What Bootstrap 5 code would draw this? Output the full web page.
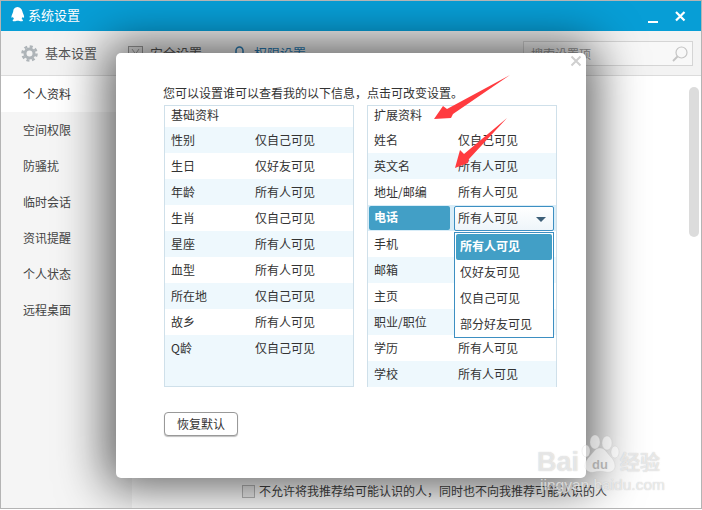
<!DOCTYPE html>
<html lang="zh"><head><meta charset="utf-8"><title>系统设置</title>
<link href="https://cdn.jsdelivr.net/npm/bootstrap@5.3.0/dist/css/bootstrap.min.css" rel="stylesheet">
<style>
html,body{margin:0;width:702px;height:510px;overflow:hidden;background:#fff}
body{font-family:"Noto Sans CJK SC","Liberation Sans",sans-serif;font-size:12px;color:#333}
.app-win{position:relative;width:702px;height:509px;border:1px solid #b4b4b4;overflow:hidden;background:#fff}
.title-bar{height:30px;background:#079ed6;color:#fff;font-size:13px;padding:0 7px 2px 8px}
.title-text{margin-left:2px}
.tool-bar{height:45px;background:#f3f3f3;border-bottom:1px solid #dcdcdc;font-size:13px;color:#555;padding-left:20px}
.tool-item{display:flex;align-items:center;gap:7px}
.tool-safe{margin-left:31px}.tool-perm{margin-left:30px;color:#2b7fb8}
.search-box{position:absolute;left:522px;top:40px;width:170px;height:25px;border:1px solid #d5d5d5;background:#f8f8f8;color:#999;padding:0 4px 0 7px;line-height:23px}
.side-nav{width:131px;background:#f5f5f5;flex:none}
.side-link{height:36px;padding:0 0 0 22px;line-height:36px;color:#444;display:block;text-decoration:none}
.side-link.active{background:#fff;color:#333}
.main-area{background:#fff;position:relative}
.scroll-thumb{position:absolute;right:2px;top:11px;width:10px;height:150px;border-radius:5px;background:#dcdcdc}
.opt-line{position:absolute;left:110px;bottom:9px;color:#444;line-height:16px;white-space:nowrap;gap:4px}
.opt-box{width:13px;height:13px;border:1px solid #bbb;background:#f4f4f4;flex:none}
.set-dialog{position:absolute;left:115px;top:52px;width:470px;height:425px;background:#fff;border-radius:5px;box-shadow:0 0 48px 10px rgba(0,0,0,.62);padding:26px 29px 0 48px;color:#333}
.dlg-close{position:absolute;right:4px;top:2px;width:12px;height:12px;margin:0;padding:0;border:0;background:none;line-height:0}
.intro{height:26px;line-height:27px;font-size:12px;white-space:nowrap;margin-left:-1px}
.panels-row{column-gap:13px}
.info-panel{width:190px;height:282px;border:1px solid #cfe0ea;background:#fff;flex:none}
.info-panel.tint-fill{background:#eef8fd}
.panel-head{height:21px;line-height:18px;padding-left:6px;background:#fff}
.info-row{height:26px;line-height:25px;display:flex;padding-left:6px}
.info-row.tint{background:#eef8fd}
.info-row.plain{background:#fff}
.lab{width:84px;flex:none}
.lab-r{width:84px;flex:none}
.hot-row{padding:1px 0 0 1px;background:#d9edf8;height:26px;display:flex;gap:4px}
.hot-lab{width:81px;height:24px;background:#429fc6;color:#fff;font-weight:700;line-height:22px;padding-left:5px;border-radius:2px}
.hot-sel{width:100px;height:25px;border:1px solid #3d8fc2;border-radius:2px;background:linear-gradient(#fff,#eef5fa);line-height:21px;padding-left:3px;color:#333;position:relative}
.caret-mark{position:absolute;right:7px;top:10px;width:0;height:0;border:5px solid transparent;border-top:5px solid #3d5f78;border-bottom:0}
.pick-menu{position:absolute;left:338px;top:179px;width:100px;height:106px;min-width:0;border:1px solid #3d8fc2;border-radius:0;padding:1px;background:#fff;font-size:12px;margin:0}
.pick-item{height:26px;line-height:23px;padding:0 0 0 4px;color:#333;display:block;text-decoration:none}
.pick-item.active{background:#429fc6;color:#fff;font-weight:700;border-radius:2px}
.reset-btn{margin-top:25px;width:74px;height:24px;padding:0;font-size:12px;line-height:22px;background:#fff;color:#333;border:1px solid #999;border-radius:4px;box-shadow:0 1px 1px rgba(0,0,0,.25)}
.arrow-layer{position:absolute;left:0;top:0;width:702px;height:510px;pointer-events:none}
.wm{position:absolute;color:rgba(255,255,255,.6);white-space:nowrap;font-family:"Liberation Sans",sans-serif;text-shadow:0 0 1px rgba(150,150,150,.6)}
.wm-bai{left:537px;top:446px;font-size:27px;line-height:32px;font-weight:700}
.wm-du{left:592px;top:458px;font-size:13px;line-height:14px;font-weight:700;color:rgba(120,120,120,.5);text-shadow:none}
.wm-jy{left:620px;top:449px;font-size:20px;line-height:26px;font-family:"Noto Sans CJK SC",sans-serif;font-weight:700}
.wm-url{left:540px;top:476px;font-size:15.5px;line-height:18px}
</style></head>
<body>
<div class="app-win d-flex flex-column">
  <div class="title-bar d-flex align-items-center flex-none">
    <svg width="17" height="18" viewBox="0 0 17 18"><path fill="#fff" d="M8.5 1C5.6 1 4.2 3.2 4.2 5.6c-.1 1-.6 1.6-1 2.6-.6 1.4-1 3-.5 3.5.3.3.9-.3 1.2-.9.2.9.6 1.7 1.2 2.3-1 .4-1.7 1-1.4 1.7.3.7 2.2.7 3.4.2.6-.3 1-.3 1.7-.3s1.1 0 1.700.3c1.200.5 3.100.5 3.400-.2.300-.7-.400-1.300-1.400-1.700.600-.6 1-1.400 1.200-2.300.3.6.9 1.200 1.200.9.5-.5.1-2.100-.5-3.500-.4-1-.9-1.600-1-2.600C12.800 3.200 11.400 1 8.500 1z"/></svg>
    <span class="title-text flex-grow-1">系统设置</span>
    <svg width="52" height="16" viewBox="0 0 52 16"><path d="M6 15h10" stroke="#fff" stroke-width="2"/><path d="M34 5l8.500 8.500M42.500 5L34 13.500" stroke="#fff" stroke-width="2.200"/></svg>
  </div>
  <div class="tool-bar d-flex align-items-center">
    <div class="tool-item">
      <svg width="17" height="17" viewBox="0 0 17 17"><circle cx="8.500" cy="8.500" r="4.500" fill="none" stroke="#aeb4b8" stroke-width="3"/><circle cx="8.500" cy="8.500" r="7" fill="none" stroke="#aeb4b8" stroke-width="2.600" stroke-dasharray="3 2.500"/></svg>
      <span>基本设置</span></div>
    <div class="tool-item tool-safe">
      <svg width="15" height="15" viewBox="0 0 15 15"><rect x=".5" y=".5" width="14" height="14" fill="#e6e6e6" stroke="#9a9a9a"/><path d="M4 3l3.500 5L11 3" fill="none" stroke="#9a9a9a"/></svg>
      <span>安全设置</span></div>
    <div class="tool-item tool-perm">
      <svg width="15" height="15" viewBox="0 0 15 15"><path d="M4 7V4.500a3.500 3.500 0 0 1 7 0V7" fill="none" stroke="#2b7fb8" stroke-width="1.500"/><rect x="1" y="7" width="13" height="7" fill="#2b7fb8"/></svg>
      <span>权限设置</span></div>
  </div>
  <div class="search-box d-flex align-items-center justify-content-between">
    <span>搜索设置项</span>
    <svg width="16" height="16" viewBox="0 0 16 16"><circle cx="9.500" cy="6.500" r="5.500" fill="none" stroke="#c4c4c4" stroke-width="1.200"/><path d="M5.500 10.500L1 15" stroke="#c4c4c4" stroke-width="1.800"/></svg>
  </div>
  <div class="d-flex flex-grow-1">
    <nav class="side-nav">
      <a class="side-link active">个人资料</a>
      <a class="side-link">空间权限</a>
      <a class="side-link">防骚扰</a>
      <a class="side-link">临时会话</a>
      <a class="side-link">资讯提醒</a>
      <a class="side-link">个人状态</a>
      <a class="side-link">远程桌面</a>
    </nav>
    <div class="main-area flex-grow-1">
      <div class="scroll-thumb"></div>
      <div class="opt-line d-flex align-items-center"><span class="opt-box"></span><span>不允许将我推荐给可能认识的人，同时也不向我推荐可能认识的人</span></div>
    </div>
  </div>

  <div class="set-dialog">
    <button class="dlg-close" aria-label="关闭"><svg width="12" height="12" viewBox="0 0 12 12"><path d="M1.500 1.500l9 9M10.500 1.500l-9 9" stroke="#cfcfcf" stroke-width="2"/></svg></button>
    <div class="intro">您可以设置谁可以查看我的以下信息，点击可改变设置。</div>
    <div class="d-flex panels-row position-relative">
      <div class="info-panel tint-fill">
        <div class="panel-head">基础资料</div>
        <div class="info-row tint"><span class="lab">性别</span><span>仅自己可见</span></div>
        <div class="info-row plain"><span class="lab">生日</span><span>仅好友可见</span></div>
        <div class="info-row tint"><span class="lab">年龄</span><span>所有人可见</span></div>
        <div class="info-row plain"><span class="lab">生肖</span><span>仅自己可见</span></div>
        <div class="info-row tint"><span class="lab">星座</span><span>所有人可见</span></div>
        <div class="info-row plain"><span class="lab">血型</span><span>所有人可见</span></div>
        <div class="info-row tint"><span class="lab">所在地</span><span>仅自己可见</span></div>
        <div class="info-row plain"><span class="lab">故乡</span><span>所有人可见</span></div>
        <div class="info-row tint"><span class="lab">Q龄</span><span>仅自己可见</span></div>
      </div>
      <div class="info-panel">
        <div class="panel-head">扩展资料</div>
        <div class="info-row plain"><span class="lab-r">姓名</span><span>仅自己可见</span></div>
        <div class="info-row tint"><span class="lab-r">英文名</span><span>所有人可见</span></div>
        <div class="info-row plain"><span class="lab-r">地址/邮编</span><span>所有人可见</span></div>
        <div class="hot-row"><span class="hot-lab">电话</span><span class="hot-sel">所有人可见<i class="caret-mark"></i></span></div>
        <div class="info-row plain"><span class="lab-r">手机</span></div>
        <div class="info-row tint"><span class="lab-r">邮箱</span></div>
        <div class="info-row plain"><span class="lab-r">主页</span></div>
        <div class="info-row tint"><span class="lab-r">职业/职位</span></div>
        <div class="info-row plain"><span class="lab-r">学历</span><span>所有人可见</span></div>
        <div class="info-row tint"><span class="lab-r">学校</span><span>所有人可见</span></div>
      </div>
    </div>
    <button class="btn reset-btn">恢复默认</button>
    <div class="dropdown-menu show pick-menu">
      <a class="pick-item active">所有人可见</a>
      <a class="pick-item">仅好友可见</a>
      <a class="pick-item">仅自己可见</a>
      <a class="pick-item">部分好友可见</a>
    </div>
  </div>
</div>
<svg class="arrow-layer" viewBox="0 0 702 510">
  <polygon fill="#ff3b3f" points="434,119 443,106 447,109 510,75 453,114 451,118"/>
  <polygon fill="#ff3b3f" points="455,168 460,150 464,154 507,118 469,159 468,163"/>
  <g fill="rgba(255,255,255,.5)" stroke="rgba(170,170,170,.35)" stroke-width=".5">
    <ellipse cx="595" cy="442" rx="5" ry="7"/><ellipse cx="607" cy="443" rx="5" ry="7"/>
    <ellipse cx="586" cy="451" rx="4" ry="6"/><ellipse cx="615" cy="452" rx="4" ry="6"/>
    <path d="M600 448c-5 0-7 5-10 8-3 3-5 6-5 10 0 5 5 7 9 6 4-1 8-1 12 0 4 1 9-1 9-6 0-4-2-7-5-10-3-3-5-8-10-8z"/>
  </g>
</svg>
<div class="wm wm-bai">Bai</div>
<div class="wm wm-du">du</div>
<div class="wm wm-jy">经验</div>
<div class="wm wm-url">jingyan.baidu.com</div>
</body></html>
